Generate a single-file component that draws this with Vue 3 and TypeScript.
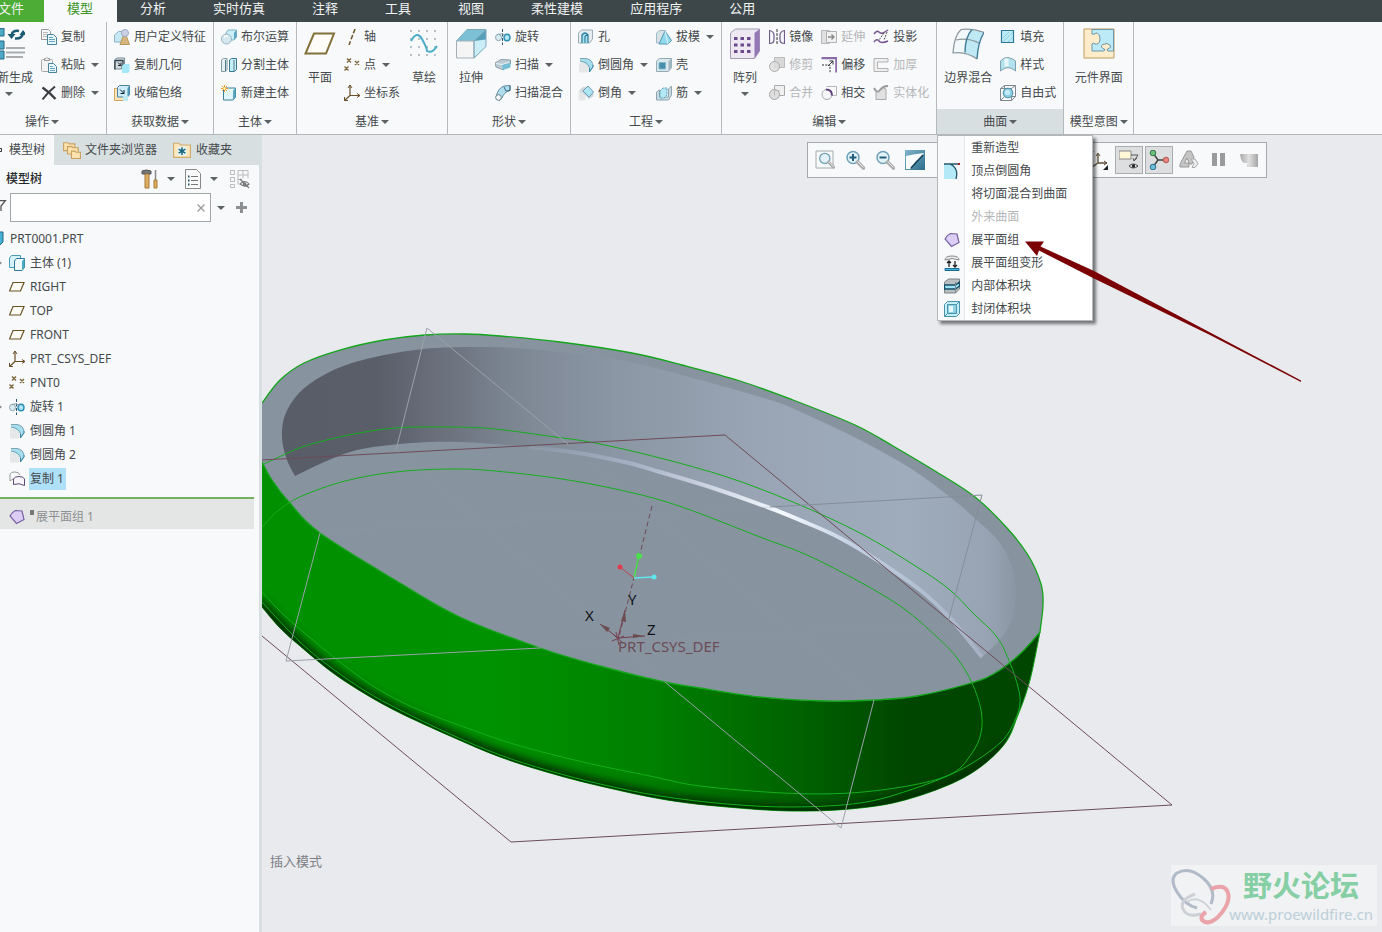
<script setup lang="ts">
import { ref } from 'vue'

interface Cmd { label: string; icon: string; arrow?: boolean; disabled?: boolean }
interface Big { label: string; icon: string; arrow?: boolean }
interface Part { big?: Big; col?: Cmd[] }
interface Group { name: string; key: string; parts: Part[] }
interface Node { label: string; icon: string; expandable?: boolean; selected?: boolean }

const roundIcon = '<path d="M1 5.500h5.500q4 1 4 5v5H1z" fill="#e6e7e9"/><path d="M2 1.500h6q7 1 7 8l-3.500 5q0-8-9.500-10z" fill="#a5dff0"/><path d="M2 1.500h6q7 1 7 8l-3.500 5V11q-1-6-9.500-7" fill="none" stroke="#7fa3b1"/><path d="M15 8v2l-3.500 5V11" fill="none" stroke="#3f88a5"/>'
const revolveIcon = '<path d="M7.500 0v16" stroke="#2b5a72" stroke-dasharray="3 1.500"/><ellipse cx="3.500" cy="8.500" rx="3" ry="3.200" fill="#d9ebf2" stroke="#8fa5b0"/><ellipse cx="12" cy="8.500" rx="3" ry="3.200" fill="#aee6f5" stroke="#2a8db3" stroke-width="1.400"/><path d="M3 5.500q4-2 8 1" fill="none" stroke="#8aa5b1"/>'
const pointIcon = '<path d="M3 1.500l4 4m0-4l-4 4M11 4l4 4m0-4l-4 4M.5 9.500l4 4m0-4l-4 4" stroke="#7b6336" stroke-width="1.300"/>'
const csysIcon = '<path d="M6 0v10.500h10M6 10.500L.5 15.500" fill="none" stroke="#6b4f2a" stroke-width="1.200"/><path d="M4 3l2-3 2 3M13 8.500l3 2-3 2M.5 12v3.500H4" fill="none" stroke="#6b4f2a"/>'
const quiltIcon = '<path d="M1 7q2-4 5.500-5.500L13 2l2 8.500-7.500 4z" fill="#dccdf5" stroke="#7461a3" stroke-width="1.200"/>'
const mag = '<circle cx="8" cy="7.500" r="6" fill="#e4f3fa" stroke="#6fa0b5" stroke-width="1.500"/><path d="M12.500 12l6 6" stroke="#aaa" stroke-width="3.500" stroke-linecap="round"/><path d="M12.500 11.500l6 6" stroke="#eee" stroke-width="1"/>'

const icons: Record<string, string> = {
  copy: '<path d="M.5.500h7l2 2v8h-9z" fill="#f6f6f6" stroke="#999"/><path d="M2 3.500h5M2 5.500h5M2 7.500h4" stroke="#bbb"/><path d="M6.500 5.500h6l3 3v7h-9z" fill="#e6f7fc" stroke="#4a819b"/><path d="M8 8.500h4M8 10.500h6M8 12.500h6" stroke="#6ba5bd"/>',
  paste: '<rect x=".5" y="2.500" width="11" height="12" rx="1" fill="#f4f4f4" stroke="#aaa"/><path d="M3.500 3.500v-2h1.500q1-2 2 0h1.500v2z" fill="#eee" stroke="#999"/><path d="M7.500 6.500h5l3 3v6h-8z" fill="#e6f7fc" stroke="#4a819b"/><path d="M9 9.500h3M9 11.500h5M9 13.500h5" stroke="#6ba5bd"/>',
  del: '<path d="M1.500 2.500Q8 7 14.500 14" fill="none" stroke="#3b3d40" stroke-width="2.400"/><path d="M14 1.500Q7 7 1.500 14.500" fill="none" stroke="#3b3d40" stroke-width="2"/>',
  udf: '<path d="M.5 6l4-3.500H10v8L7 13H.5z" fill="#c4e9f5" stroke="#8ab3c4"/><path d="M6 15.500l3-8h3.500l3 8z" fill="#d6b67c" stroke="#b5965c"/><circle cx="11" cy="4" r="3.500" fill="#ccd1e5" stroke="#a0a6c2"/>',
  copygeom: '<path d="M.5 3l2-2h8v8h-3v3h-7z" fill="#d3dadf" stroke="#7c8c96"/><path d="M1 3.500v9M1 3.500h8V9" fill="none" stroke="#33444e" stroke-width="1.300"/><path d="M4 5.500l3 3m0-3v3H4" stroke="#123" fill="none"/><path d="M8 9l2-2h5.500v7.500l-1.500 1.500H8z" fill="#a5e8f7"/>',
  shrink: '<path d="M.5 3.500h11v12H.5z" fill="#ffe5bb" stroke="#d5a45c"/><path d="M3.500 2.500l2-2h10v9l-2 2.500h-10z" fill="#cbeef8" stroke="#4a819b"/><path d="M13.500 3v9l2-2.500v-9z" fill="#4a9ab5"/><path d="M6 4.500l4 4m0-3.500v3.500H6.500" stroke="#123" fill="none"/><path d="M9 11h5v5H9z" fill="#bce9f4"/>',
  bool: '<path d="M5 4l2-3h8.500v7L13 11H5z" fill="#c9eff8" stroke="#7fb0c3"/><path d="M13 4l2.500-3v7L13 11z" fill="#5aa5bf"/><circle cx="5.500" cy="10" r="5" fill="#d5e8f0" stroke="#9ab6c2"/><path d="M3 8.500q1.500-2.500 4-1.500" stroke="#fff" fill="none" stroke-width="1.500"/>',
  split: '<path d="M.5 3l2-1.500H6v11L4.500 14.500h-4z" fill="#e6eff3" stroke="#7f99a5"/><path d="M8.500 3l2-1.500h5v11L13.500 14.500h-5z" fill="#c4eef8" stroke="#3a7790"/><path d="M4.500 3v11M13 3v11" stroke="#547a8c"/>',
  newbody: '<path d="M2.500 5l2-2h10v9l-2.500 3H2.500z" fill="#e1f6fb" stroke="#3d7f98"/><path d="M12 5.500V15l2.500-3V3z" fill="#5aa5bf"/><path d="M3.500 0v7M0 3.500h7M1 1l5 5M6 1L1 6" stroke="#e39a26"/><circle cx="3.500" cy="3.500" r="1.200" fill="#fff3b0"/>',
  axis: '<path d="M11 0L5 16" stroke="#6b5424" stroke-width="1.500" stroke-dasharray="4.500 2"/>',
  point: pointIcon, csys: csysIcon, revolve: revolveIcon, round: roundIcon, quilt: quiltIcon,
  sweep: '<path d="M0 6l6-3.500 9.500.5v4l-7 1v5L1 10z" fill="#bccbd3" stroke="#8b9fa9"/><path d="M7 8l8.500-2v4.500L8 13z" fill="#74bfd6"/><path d="M1 6.500l6 1 7-2.500" fill="none" stroke="#e7f2f6"/>',
  sweepblend: '<path d="M1 12Q3 3 9 1l6-.5v5Q9 7 7 13l-3 2.500z" fill="#afdeed" stroke="#5f8da1"/><circle cx="3.500" cy="12.500" r="2.800" fill="#fff" stroke="#647f8c"/><path d="M9 2l2 4M15 .5v5L11 6" stroke="#33677f" fill="none"/>',
  hole: '<path d="M.5 4l3-3h11v9l-3 4H.5z" fill="#e5edf0" stroke="#9aafb8"/><path d="M4 14V6q3-4 6 0v8" fill="#a4e1f2" stroke="#2f7f9d" stroke-width="1.300"/><path d="M7 14V7l3-1" fill="none" stroke="#226d8b"/>',
  chamfer: '<path d="M.5 6h7v9.500h-7z" fill="#e6e7e9"/><path d="M1 5.500L5 2l5-.5L15.500 8v3L11 14.500 8 11z" fill="#ccd7dd"/><path d="M5 6l5-5 5.500 6L11 12z" fill="#afe6f4" stroke="#6a9bb0"/>',
  draft: '<path d="M.5 4l3-2.500h6L7 14H.5z" fill="#d7e2e7" stroke="#9dbac6"/><path d="M9 2l6.500 9.500L12 15H3z" fill="#93d9ee" stroke="#5597b0"/><path d="M9 2l3 13" stroke="#dff5fb"/>',
  shell: '<path d="M.5 4l3-2.500h12v9l-3 4H.5z" fill="#dae7ec" stroke="#93a9b3"/><path d="M3 5.500h6.500v6.500H3z" fill="#4690ac" stroke="#7fb5c9"/><path d="M12.500 4v10l3-3V1.500z" fill="#a1b8c3"/>',
  rib: '<path d="M.5 7l3-2v7h9V4l3-3v9l-3 5H.5z" fill="#c9dce3" stroke="#8ea5b0"/><path d="M4 6l3-3h4v7l-3 3H4z" fill="#b5e8f5" stroke="#4f9cb6" stroke-dasharray="2 1"/>',
  mirror: '<path d="M.5 1v14M.5 1.500q4.500 1 4.500 5v4q0 4-4.500 4M15.500 1v14M15.500 1.500q-4.500 1-4.500 5v4q0 4 4.500 4" fill="none" stroke="#705a88" stroke-width="1.200"/><path d="M8 0v16" stroke="#333" stroke-dasharray="3 1"/>',
  extend: '<path d="M.5 1.500h8v13h-8z" fill="#e0e0e0" stroke="#bbb"/><path d="M5.500 2.500h10v11h-10z" fill="#f1f1f1" stroke="#b2b2b2"/><path d="M7 8h6M10.500 5.500L13 8l-2.500 2.500" fill="none" stroke="#888" stroke-width="1.300"/>',
  project: '<path d="M1 5q3-4 5-2t4 1 5-3M1 13q3-4 5-1t9 0" fill="none" stroke="#77558f" stroke-width="1.500"/><path d="M11 4l-5 7M14 3l-3 8" stroke="#555" stroke-dasharray="2 1"/>',
  trim: '<path d="M5.500.500h10v10h-10z" fill="#d8d8d8" stroke="#bbb"/><circle cx="5.500" cy="9.500" r="5" fill="#ddd" fill-opacity=".8" stroke="#aaa"/>',
  offset: '<path d="M.5 1h15v14.500" fill="none" stroke="#8c6ba8" stroke-width="2.500"/><path d="M1 8h8v8" fill="none" stroke="#333" stroke-dasharray="2 1.300"/><path d="M7 9l5-5M8.500 4H12v3.500" fill="none" stroke="#333"/>',
  thicken: '<path d="M15 1.500H1v13h14v-3H4.500V5H15z" fill="#efefef" stroke="#b2b2b2"/>',
  merge: '<path d="M5.500.500h10v10h-10z" fill="#f0f0f0" stroke="#aaa"/><circle cx="5.500" cy="9.500" r="5" fill="#dedede" stroke="#a5a5a5"/><path d="M5.500 10.500v-5h5" stroke="#bbb" fill="none"/>',
  intersect: '<path d="M5.500 1.500h10v9h-5" fill="none" stroke="#b5b5b5"/><circle cx="6" cy="9.500" r="5" fill="#f7f7f9" stroke="#aaa"/><path d="M5 4.500q6 0 6 6" fill="none" stroke="#60407c" stroke-width="2"/>',
  solidify: '<path d="M1 3q3 6 6 2t8-4" fill="none" stroke="#999" stroke-width="2"/><path d="M3 7q3 1 5-2t5-1v10.500H3z" fill="#e1e1e1" stroke="#aaa"/>',
  fill: '<path d="M1.500 1.500h12v12h-12z" fill="#bcecf7" stroke="#2f7795" stroke-width="1.200"/><path d="M3 9l6-6M3 13L13 3M8 13l5-5" stroke="#8fcde0"/>',
  style: '<path d="M.5 4Q4 0 8 .5q5 1 7.500 3.500v10Q8 7 .5 14z" fill="#b3e2ef" stroke="#7f9fac"/><path d="M6.500 1.500v8" stroke="#e8f7fb" stroke-width="4"/>',
  free: '<path d="M.5 3.500h11v12H.5zM4.500.500h11v11h-11zM.5 3.500l4-3M11.500 3.500l4-3M11.500 15.500l4-4M.5 15.500l4-4" fill="none" stroke="#7c888d"/><circle cx="8" cy="8" r="4.800" fill="#8dcfe4" stroke="#4a8ba3"/><circle cx="7.500" cy="7.500" r="2.500" fill="#c6edf7"/>',
  vertexround: '<path d="M0 1h8q6 5 4 15H0z" fill="#b4eaf8"/><path d="M0 1h15M6 1q9 4 6 15" fill="none" stroke="#24566c" stroke-width="1.300"/><path d="M14 0h2v2h-2z" fill="#a22"/>',
  flatdeform: '<path d="M1 5q0-4 7-4t7 4q-7-3-14 0z" fill="#eee" stroke="#888"/><path d="M5 12V6M3 8l2-2 2 2M11 6v6M9 10l2 2 2-2" fill="none" stroke="#222" stroke-width="1.300"/><path d="M1 13.500h14v2H1z" fill="#42b5dc" stroke="#1b6b8c"/>',
  innervol: '<path d="M.5 4l4-3h11v10l-4 4H.5z" fill="#b9bec1" stroke="#7c858a"/><path d="M.5 7h11l4-3v4l-4 3H.5z" fill="#9ae3f4" stroke="#164e66" stroke-width="1.300"/><path d="M11.500 4v11" stroke="#7c858a"/>',
  closedvol: '<path d="M.5 3.500l3-3h12v12l-3 3H.5z" fill="#c4eef8" stroke="#4a93ad"/><path d="M3.500 3.500h9v9h-9z" fill="#8fd1e3" stroke="#4a93ad"/><path d="M5 5h4v6H5z" fill="#e5f8fc"/><path d="M12.500 3.500l3-3M.5 15.500l3-3" stroke="#4a93ad"/>',
  part: '<path d="M0 3l3-2h11v10l-4 4H0z" fill="#46b2d3" stroke="#1e6783"/>',
  bodies: '<path d="M.5 3l2-2.500h9v9l-2 3h-9z" fill="#d6f2f9" stroke="#4a9bb8"/><path d="M5.500 6l2-2.500h8v9l-2.500 3h-7.500z" fill="#eefafd" stroke="#2f7795"/><path d="M13 6v9l2.500-3V3.500z" fill="#4ea9c6"/>',
  plane: '<path d="M4 3.500h11L11.500 12H.5z" fill="#fcfaf4" stroke="#6b5424" stroke-width="1.200"/>',
  copysurf: '<path d="M1 10V4q0-3 5-3 4 0 5 3" fill="none" stroke="#999"/><path d="M1 10q2-2 4-2" fill="none" stroke="#999"/><path d="M4.500 13.500V8q1-2.500 5.500-2.500T15.500 8v6.500q-5.500-3-11-1z" fill="#f8f5fb" stroke="#5c4a73"/>',
  folders: '<g fill="#fde2ad" stroke="#c9a262"><path d="M.5 1.500h4l1 1h5v6h-10z"/><path d="M4 5h4l1 1h4.500v5.500H4z"/><path d="M7.500 9h3l1 1h4v5.500h-8z"/></g>',
  favorite: '<path d="M.5 2h5l1 1.500h9v11H.5z" fill="#fde7ba" stroke="#d0ab6c"/><path d="M4 5h8v8H4z" fill="#e3f3f6"/><path d="M8 5.500v7M5 7.200l6 3.600M11 7.200l-6 3.600" stroke="#14637a" stroke-width="1.300"/>'
}

function dotGrid(): string {
  let out = ''
  for (const y of [3, 11, 19, 27]) for (const x of [3, 11, 19, 27]) out += `<circle cx="${x}" cy="${y}" r=".7"/>`
  return `<g fill="#48606c">${out}</g>`
}

const bigIcons: Record<string, string> = {
  regen: '<path d="M0 2l11-2v8H0zM0 13h11v8H0zM0 23h11v8H0z" fill="#4ea9c6" stroke="#1e6783"/><path d="M18.500 7Q20 2 26 3M30 5.500Q29 11 22 10.500" fill="none" stroke="#1c5a74" stroke-width="2.500"/><path d="M14.500 6h8l-4 5zM26.500 7h7.500l-4-5z" fill="#1c5a74"/><path d="M13 20h19M13 24.500h19M13 29h17" stroke="#a9adaf" stroke-width="2"/>',
  plane: '<path d="M10 5.500h20L22 25.500H1.500z" fill="#fdfcf8" stroke="#82703a" stroke-width="2"/>',
  sketch: dotGrid() + '<path d="M3 13Q9 2 14 11t5 12q5 3 10-5" fill="none" stroke="#4bacc9" stroke-width="2"/>',
  extrude: '<path d="M1.500 13L12 1.500h19L19 13z" fill="#7cc0d6"/><path d="M19 13L31 1.500v17L19 31z" fill="#cbedf7"/><path d="M19 13L31 1.500v10z" fill="#559fb9"/><path d="M1.500 13H19v17H1.500z" fill="#f5f5f6" stroke="#a5b0b6"/><path d="M1.500 13L12 1.500h19v17L19 30V13L31 1.500" fill="none" stroke="#7fa9b9"/>',
  pattern: '<path d="M1.500 5l5-4h24v22l-5 7.500h-24z" fill="#ede8f2" stroke="#a59cb2"/><path d="M25.500 5l5-4v22l-5 7.500z" fill="#9577b5"/><path d="M5 9h3.500v3H5zM11.500 9H15v3h-3.500zM18 9h3.500v3H18zM5 15.500h3.500v3H5zM11.500 15.500H15v3h-3.500zM18 15.500h3.500v3H18zM5 22h3.500v3H5zM11.500 22H15v3h-3.500zM18 22h3.500v3H18z" fill="#6a4a8c"/>',
  boundary: '<path d="M1 25Q2 5 9 1.500q9-2 23 3Q26 14 25 31 14 23 1 25z" fill="#f3f9fb"/><path d="M20 2Q29 2 32 4.500 26 14 25 31q-6-5-12-6.500Q14 9 20 2z" fill="#bfe9f5"/><path d="M4 12q12-3 24 3.500M9 1.500Q2 8 1 25 14 23 25 31M9 1.500Q20 0 32 4.500" fill="none" stroke="#8a979d" stroke-width="1.200"/><path d="M20 1.500Q13 9 13 24.500M32 4.500Q26 14 25 31" fill="none" stroke="#3f7c96" stroke-width="1.400"/>',
  component: '<path d="M1 1h30v29H1z" fill="#ffeccb" stroke="#c39a60"/><path d="M9 1.500h21.500V23H26q-3 0-1.500-2 4-1 3-3.500-3-3.500-8-1-3 3 2 4.500 1 2-1.500 2H9v-7q2-2 3 0 4 1 5-4 0-7-4-7-2 2-4 1z" fill="#bdeaf7" stroke="#6b97a8"/>'
}

const groups: Group[] = [
  { name: '操作', key: 'ops', parts: [
    { big: { label: '重新生成', icon: 'regen', arrow: true } },
    { col: [{ label: '复制', icon: 'copy' }, { label: '粘贴', icon: 'paste', arrow: true }, { label: '删除', icon: 'del', arrow: true }] }] },
  { name: '获取数据', key: 'data', parts: [
    { col: [{ label: '用户定义特征', icon: 'udf' }, { label: '复制几何', icon: 'copygeom' }, { label: '收缩包络', icon: 'shrink' }] }] },
  { name: '主体', key: 'body', parts: [
    { col: [{ label: '布尔运算', icon: 'bool' }, { label: '分割主体', icon: 'split' }, { label: '新建主体', icon: 'newbody' }] }] },
  { name: '基准', key: 'datum', parts: [
    { big: { label: '平面', icon: 'plane' } },
    { col: [{ label: '轴', icon: 'axis' }, { label: '点', icon: 'point', arrow: true }, { label: '坐标系', icon: 'csys' }] },
    { big: { label: '草绘', icon: 'sketch' } }] },
  { name: '形状', key: 'shape', parts: [
    { big: { label: '拉伸', icon: 'extrude' } },
    { col: [{ label: '旋转', icon: 'revolve' }, { label: '扫描', icon: 'sweep', arrow: true }, { label: '扫描混合', icon: 'sweepblend' }] }] },
  { name: '工程', key: 'eng', parts: [
    { col: [{ label: '孔', icon: 'hole' }, { label: '倒圆角', icon: 'round', arrow: true }, { label: '倒角', icon: 'chamfer', arrow: true }] },
    { col: [{ label: '拔模', icon: 'draft', arrow: true }, { label: '壳', icon: 'shell' }, { label: '筋', icon: 'rib', arrow: true }] }] },
  { name: '编辑', key: 'edit', parts: [
    { big: { label: '阵列', icon: 'pattern', arrow: true } },
    { col: [{ label: '镜像', icon: 'mirror' }, { label: '修剪', icon: 'trim', disabled: true }, { label: '合并', icon: 'merge', disabled: true }] },
    { col: [{ label: '延伸', icon: 'extend', disabled: true }, { label: '偏移', icon: 'offset' }, { label: '相交', icon: 'intersect' }] },
    { col: [{ label: '投影', icon: 'project' }, { label: '加厚', icon: 'thicken', disabled: true }, { label: '实体化', icon: 'solidify', disabled: true }] }] },
  { name: '曲面', key: 'surface', parts: [
    { big: { label: '边界混合', icon: 'boundary' } },
    { col: [{ label: '填充', icon: 'fill' }, { label: '样式', icon: 'style' }, { label: '自由式', icon: 'free' }] }] },
  { name: '模型意图', key: 'intent', parts: [{ big: { label: '元件界面', icon: 'component' } }] }
]

const menu: Cmd[] = [
  { label: '重新造型', icon: '' },
  { label: '顶点倒圆角', icon: 'vertexround' },
  { label: '将切面混合到曲面', icon: '' },
  { label: '外来曲面', icon: '', disabled: true },
  { label: '展平面组', icon: 'quilt' },
  { label: '展平面组变形', icon: 'flatdeform' },
  { label: '内部体积块', icon: 'innervol' },
  { label: '封闭体积块', icon: 'closedvol' }
]

const tabs = ['文件', '模型', '分析', '实时仿真', '注释', '工具', '视图', '柔性建模', '应用程序', '公用']
const nodes: Node[] = [
  { label: '主体 (1)', icon: 'bodies', expandable: true },
  { label: 'RIGHT', icon: 'plane' },
  { label: 'TOP', icon: 'plane' },
  { label: 'FRONT', icon: 'plane' },
  { label: 'PRT_CSYS_DEF', icon: 'csys' },
  { label: 'PNT0', icon: 'point' },
  { label: '旋转 1', icon: 'revolve', expandable: true },
  { label: '倒圆角 1', icon: 'round' },
  { label: '倒圆角 2', icon: 'round' },
  { label: '复制 1', icon: 'copysurf', selected: true }
]

interface Tool { name: string; svg: string; on?: boolean }
const leftTools: Tool[] = [
  { name: '重新调整', svg: '<path d="M1 1h17v17H1z" fill="none" stroke="#a3aaae"/><g transform="translate(3 2) scale(.85)">' + mag + '</g>' },
  { name: '放大', svg: mag + '<path d="M4.500 7.500h7M8 4v7" stroke="#1f5f7a" stroke-width="2"/>' },
  { name: '缩小', svg: mag + '<path d="M4.500 7.500h7" stroke="#1f5f7a" stroke-width="2"/>' },
  { name: '重画', svg: '<linearGradient id="rp" x1="0" y1="0" x2="1" y2="1"><stop offset="0" stop-color="#7fb5cb"/><stop offset="1" stop-color="#2c6d8a"/></linearGradient><path d="M0 0h20v20H0z" fill="url(#rp)"/><path d="M1 6Q9 4 19 3q-2 4-8 8l-6 8H1z" fill="#f8fcfd"/><path d="M18 5L6 18" stroke="#174258" stroke-width="1.500"/>' }
]
const rightTools: Tool[] = [
  { name: '基准显示过滤器', svg: '<path d="M4 1L0 10M9 4v9h9M9 13l-6 4" fill="none" stroke="#5f4f36" stroke-width="1.300"/><path d="M7 6l2-3 2 3M15 11l3 2-3 2" fill="none" stroke="#5f4f36"/><path d="M19 15v5h-5z" fill="#222"/>' },
  { name: '注释显示', svg: '<path d="M0 1h12v8H0z" fill="#fdf7d8" stroke="#888"/><path d="M12 5h7l-4 6M18 8l-3 3-1-3" fill="none" stroke="#555"/><path d="M10 16q4-4 9 0-5 4-9 0z" fill="#eee" stroke="#444"/><circle cx="14.500" cy="16" r="1.700" fill="#222"/>', on: true },
  { name: '旋转中心', svg: '<path d="M4 3l5 7 8 0M9 10l-5 7" fill="none" stroke="#444" stroke-width="1.500"/><circle cx="4" cy="3" r="2.800" fill="#6cc07a" stroke="#33774a"/><circle cx="17" cy="10" r="2.800" fill="#e8857c" stroke="#b35550"/><circle cx="4" cy="17" r="2.800" fill="#6cbdd8" stroke="#2c7291"/>', on: true },
  { name: '仿真', svg: '<path d="M8 1h4l3 6-2 7h-2.500L8 8l-2.500 5H10v4H1v-3z" fill="#c4c4c4" stroke="#999"/><path d="M12 9h4l3 4.500-3 4h-3l2-4z" fill="#eee" stroke="#aaa"/>' },
  { name: '暂停', svg: '<path d="M3 3h5v13H3zM11 3h5v13h-5z" fill="#9b9b9b"/>' },
  { name: '继续', svg: '<linearGradient id="rs"><stop offset="0" stop-color="#aaa"/><stop offset=".5" stop-color="#e0e0e0"/><stop offset="1" stop-color="#a5a5a5"/></linearGradient><path d="M1 4h18v13H8q-1-2 1-4H5Q2 12 1 4z" fill="url(#rs)"/>' }
]

type Pt = [number, number]

/** Smooth curve through the given points (Catmull-Rom turned into cubic Béziers). */
function curve(pts: Pt[], start = 'M'): string {
  let d = `${start}${pts[0][0]} ${pts[0][1]}`
  for (let i = 0; i < pts.length - 1; i++) {
    const a = pts[i - 1] ?? pts[i]
    const b = pts[i]
    const c = pts[i + 1]
    const e = pts[i + 2] ?? c
    const n = [b[0] + (c[0] - a[0]) / 6, b[1] + (c[1] - a[1]) / 6, c[0] - (e[0] - b[0]) / 6, c[1] - (e[1] - b[1]) / 6, c[0], c[1]]
    d += 'C' + n.map(v => v.toFixed(1)).join(' ')
  }
  return d
}

const rimBack: Pt[] = [[262, 403], [280, 380], [304, 363], [340, 350], [384, 340], [425, 335], [465, 334], [500, 336], [560, 342], [632, 353], [682, 365], [740, 381], [793, 400], [855, 425], [893, 446], [935, 471], [975, 497], [1007, 528], [1028, 555], [1041, 584], [1043, 605], [1040, 632]]
const rimFront: Pt[] = [[1040, 632], [1020, 654], [995, 673], [971, 683], [917, 696], [874, 700], [825, 701], [760, 697], [700, 688], [660, 681], [600, 666], [540, 648], [462, 618], [400, 583], [320, 533], [289, 502], [272, 480], [262, 462]]
const base: Pt[] = [[262, 607], [280, 628], [300, 646], [333, 673], [367, 695], [400, 713], [450, 736], [500, 757], [550, 773], [600, 786], [667, 800], [727, 807], [790, 811], [850, 809], [905, 800], [965, 777], [1003, 746], [1018, 715], [1030, 680], [1040, 632]]
const wallTop: Pt[] = [[295, 476], [287, 460], [282, 438], [285, 415], [299, 393], [322, 376], [352, 363], [395, 353], [435, 348], [475, 347], [515, 348], [569, 353], [629, 362], [682, 375], [770, 400], [803, 413], [860, 440], [910, 468], [950, 497], [980, 523], [1000, 543], [1012, 567], [1016, 593], [1012, 620], [1000, 640], [982, 657]]
const wallFoot: Pt[] = [[982, 657], [970, 642], [950, 618], [920, 590], [880, 562], [840, 538], [807, 523], [770, 508], [710, 487], [660, 472], [629, 463], [579, 453], [529, 447], [462, 442], [412, 443], [362, 449], [329, 460], [295, 476]]
const edgeOuter: Pt[] = [[262, 465], [279, 457], [305, 446], [349, 435], [395, 428], [449, 427], [495, 429], [555, 437], [595, 443], [660, 458], [727, 477], [793, 502], [860, 533], [917, 567], [950, 590], [973, 613], [997, 637], [1010, 663], [1018, 687], [1020, 703], [1015, 720], [1000, 743], [960, 770], [910, 790], [860, 803], [793, 807], [727, 804], [660, 796], [600, 784], [550, 771], [500, 755], [450, 734], [400, 710], [367, 692], [333, 669], [300, 642], [262, 602]]
const edgeInner: Pt[] = [[262, 527], [279, 510], [302, 496], [345, 481], [395, 472], [449, 469], [495, 471], [562, 479], [629, 492], [682, 507], [760, 537], [807, 555], [860, 582], [903, 608], [937, 637], [957, 658], [972, 683], [981, 710], [981, 733], [972, 753], [953, 773], [913, 785], [850, 793], [783, 793], [700, 786], [650, 776], [583, 762], [517, 745], [467, 728], [417, 709], [383, 692], [353, 672], [313, 640], [285, 616], [262, 592]]
const shadow: Pt[] = [[255, 604], [300, 649], [333, 676], [367, 698], [400, 716], [450, 739], [500, 759], [550, 775], [600, 788], [667, 802], [727, 809], [790, 813], [850, 811], [905, 802], [965, 780], [1008, 748]]

const hull = curve(rimFront.slice().reverse()) + curve(base.slice().reverse(), 'L') + 'Z'
const face = curve(rimBack) + curve(rimFront, 'L') + 'Z'
const rimLine = curve(rimBack) + curve(rimFront, 'L')
const wall = curve(wallTop) + curve(wallFoot, 'L') + 'Z'
const glint = curve(wallFoot.slice(0, 13).reverse())

const query = ref('')
const menuOpen = ref(true)
const activeTab = ref(1)
</script>

<template>
  <div class="app">
    <nav class="tabs">
      <button v-for="(t, i) in tabs" :key="t" type="button" :class="['tab', { file: i === 0, active: i === activeTab }]" @click="activeTab = i">{{ t }}</button>
    </nav>

    <header class="ribbon">
      <section v-for="g in groups" :key="g.key" :class="['group', g.key]">
        <div class="group-body">
          <template v-for="(p, i) in g.parts" :key="i">
            <button v-if="p.big" type="button" class="big">
              <svg width="32" height="32" viewBox="0 0 32 32" v-html="bigIcons[p.big.icon]"></svg>
              <span>{{ p.big.label }}</span>
              <i v-if="p.big.arrow" class="caret"></i>
            </button>
            <div v-else class="col">
              <button v-for="c in p.col" :key="c.label" type="button" class="cmd" :disabled="c.disabled">
                <svg width="16" height="16" viewBox="0 0 16 16" v-html="icons[c.icon]"></svg>
                <span>{{ c.label }}</span>
                <i v-if="c.arrow" class="caret"></i>
              </button>
            </div>
          </template>
        </div>
        <button type="button" class="group-name" @click="g.key === 'surface' && (menuOpen = !menuOpen)">
          <span>{{ g.name }}</span><i class="caret"></i>
        </button>
        <div v-if="g.key === 'surface' && menuOpen" class="menu" role="menu">
          <button v-for="m in menu" :key="m.label" type="button" role="menuitem" :disabled="m.disabled">
            <span class="menu-icon"><svg v-if="m.icon" width="16" height="16" viewBox="0 0 16 16" v-html="icons[m.icon]"></svg></span>
            <span>{{ m.label }}</span>
          </button>
        </div>
      </section>
    </header>

    <main class="main">
      <aside class="side">
        <div class="side-tabs">
          <button type="button" class="side-tab current"><svg width="4" height="16" viewBox="0 0 4 16"><path d="M-2 6.500h3.500v3H-2" fill="none" stroke="#333" /></svg><span>模型树</span></button>
          <button type="button" class="side-tab browse"><svg width="18" height="18" viewBox="0 0 16 16" v-html="icons.folders"></svg><span>文件夹浏览器</span></button>
          <button type="button" class="side-tab fav"><svg width="18" height="18" viewBox="0 0 16 16" v-html="icons.favorite"></svg><span>收藏夹</span></button>
        </div>
        <div class="side-pane">
          <div class="side-head">
            <h2>模型树</h2>
            <button type="button" aria-label="设置">
              <svg width="18" height="20" viewBox="0 0 18 20"><path d="M1 2q4-2 9 0v3H1z" fill="#777" stroke="#555" /><path d="M4 5h4v14H4z" fill="#e0ae60" stroke="#a37b3f" /><path d="M14.500 1v10" stroke="#888" stroke-width="1.500" /><path d="M13 11h3v8h-3z" fill="#e2ad54" stroke="#a37b3f" /></svg>
              <i class="caret"></i>
            </button>
            <button type="button" aria-label="显示">
              <svg width="18" height="20" viewBox="0 0 18 20"><path d="M1.500.500h11l4 4v15h-15z" fill="#fafafa" stroke="#888" /><path d="M7 7.500h7M7 11.500h7M7 15.500h7" stroke="#777" /><path d="M4 7.500h1.500M4 11.500h1.500M4 15.500h1.500" stroke="#256" stroke-width="2" /></svg>
              <i class="caret"></i>
            </button>
            <button type="button" aria-label="隐藏列">
              <svg width="20" height="20" viewBox="0 0 20 20"><path d="M.5 1.500h4v4h-4zM.5 8.500h4v4h-4zM.5 15.500h4v3h-4zM8 10.500h4M8 1.500h10v8M8 1.500v14M13 1.500v8M8 6h10" fill="none" stroke="#bbb" /><path d="M10 15q5-5 9 0-4 4-9 0zM10 10l9 9" fill="none" stroke="#777" stroke-width="1.200" /><circle cx="14.500" cy="15" r="1.800" fill="#777" /></svg>
            </button>
          </div>
          <div class="search">
            <svg width="10" height="16" viewBox="0 0 10 16"><path d="M-3 .5h8.500L1 6v5" fill="none" stroke="#555" stroke-width="1.300" /></svg>
            <div class="box">
              <input v-model="query" type="text" aria-label="过滤模型树" />
              <button type="button" aria-label="清除" @click="query = ''"><svg width="8" height="8" viewBox="0 0 8 8"><path d="M.5.500l7 7m0-7l-7 7" stroke="#999" stroke-width="1.300" /></svg></button>
            </div>
            <button type="button" aria-label="过滤选项"><i class="caret"></i></button>
            <button type="button" aria-label="添加"><svg width="11" height="11" viewBox="0 0 11 11"><path d="M0 5.500h11M5.500 0v11" stroke="#8c9092" stroke-width="3" /></svg></button>
          </div>
          <ul class="tree">
            <li class="root"><svg width="16" height="16" viewBox="0 0 16 16" v-html="icons.part"></svg><span>PRT0001.PRT</span></li>
            <li v-for="n in nodes" :key="n.label">
              <i class="twist"><svg v-if="n.expandable" width="3" height="6" viewBox="0 0 3 6"><path d="M-2 0l4 3-4 3z" fill="#888" /></svg></i>
              <svg width="16" height="16" viewBox="0 0 16 16" v-html="icons[n.icon]"></svg>
              <span :class="{ selected: n.selected }">{{ n.label }}</span>
            </li>
          </ul>
          <div class="pending">
            <svg width="16" height="16" viewBox="0 0 16 16" v-html="icons.quilt"></svg>
            <i class="mark"></i><span>展平面组 1</span>
          </div>
        </div>
      </aside>

      <section class="view">
        <svg class="scene" aria-hidden="true">
          <defs>
            <linearGradient id="wall" gradientUnits="userSpaceOnUse" x1="282" y1="0" x2="1016" y2="0">
              <stop offset="0" stop-color="#585d68" /><stop offset=".13" stop-color="#595e69" /><stop offset=".22" stop-color="#6b717d" /><stop offset=".32" stop-color="#7d8794" /><stop offset=".45" stop-color="#8b96a4" /><stop offset=".65" stop-color="#99a5b4" /><stop offset=".85" stop-color="#9facbb" /><stop offset=".96" stop-color="#98a4b3" /><stop offset="1" stop-color="#8b96a4" />
            </linearGradient>
            <linearGradient id="side" gradientUnits="userSpaceOnUse" x1="262" y1="0" x2="1043" y2="0">
              <stop offset="0" stop-color="#009000" /><stop offset=".3" stop-color="#009200" /><stop offset=".5" stop-color="#008000" /><stop offset=".7" stop-color="#006000" /><stop offset=".83" stop-color="#004500" /><stop offset="1" stop-color="#004600" />
            </linearGradient>
            <linearGradient id="glint" gradientUnits="userSpaceOnUse" x1="480" y1="0" x2="985" y2="0">
              <stop offset="0" stop-color="#95a0b0" stop-opacity="0" /><stop offset=".3" stop-color="#a5b0c4" /><stop offset=".6" stop-color="#f4f8ff" /><stop offset=".75" stop-color="#c0cde0" /><stop offset="1" stop-color="#a5b1c3" />
            </linearGradient>
            <filter id="soft" x="-5%" y="-20%" width="110%" height="140%"><feGaussianBlur stdDeviation="4" /></filter>
            <clipPath id="hull"><path :d="hull" /></clipPath>
          </defs>
          <g transform="translate(-262 -135)" fill="none">
            <path :d="hull" fill="url(#side)" stroke="#12a012" />
            <path clip-path="url(#hull)" :d="curve(shadow)" stroke="#003300" stroke-width="18" filter="url(#soft)" />
            <path :d="face" fill="#8893a0" />
            <path :d="wall" fill="url(#wall)" />
            <path :d="glint" stroke="url(#glint)" stroke-width="4" />
            <path :d="rimLine" stroke="#13a51a" stroke-width="1.300" />
            <g stroke="#14ae1c">
              <path :d="curve(edgeOuter)" />
              <path :d="curve(edgeInner)" />
            </g>
            <path d="M262 460L725 435 1172 805 511 842 262 636" stroke="#6d4c57" />
            <g stroke="#9aa1a9">
              <path d="M427 328L396 450M427 328L568 444M286 661L320 533M286 661L540 648M665 682L841 828 874 700" />
              <path d="M982 495L770 507M982 495L948 622" stroke="#858e9a" />
              <path d="M320 531L770 507M540 648L948 624M396 450L665 682M568 444L874 700" stroke="#929ba6" stroke-opacity=".3" />
            </g>
            <path d="M652 506L619 637" stroke="#6d4c57" stroke-dasharray="5 3" />
            <path d="M634 578L639 556" stroke="#4ce04c" stroke-width="1.500" /><path d="M634 578L620 567" stroke="#c04050" /><path d="M634 578L653 577" stroke="#5fe6ee" stroke-width="1.500" />
            <circle cx="639" cy="556" r="3" fill="#4ce04c" /><circle cx="620" cy="567" r="2.500" fill="#e03c50" /><circle cx="654" cy="577" r="2.500" fill="#5fe6ee" />
            <path d="M618 638L600 624M618 638L625 610M618 638L645 636M613 634l10 9M612 641l12-5M616 632l3 13" stroke="#75404f" />
            <path d="M600 624l10 4-3 4zM625 610l1 12-5-1zM645 636l-12-2v4z" fill="#6d4c50" />
            <g class="axis"><text x="585" y="621">X</text><text x="628" y="605">Y</text><text x="647" y="635">Z</text></g>
            <text class="csys-name" x="618" y="652">PRT_CSYS_DEF</text>
          </g>
        </svg>

        <div class="toolbar" role="toolbar" aria-label="图形">
          <button v-for="t in leftTools" :key="t.name" type="button" :aria-label="t.name"><svg width="20" height="20" viewBox="0 0 20 20" v-html="t.svg"></svg></button>
          <span class="gap"></span>
          <button v-for="t in rightTools" :key="t.name" type="button" :class="{ on: t.on }" :aria-label="t.name"><svg width="20" height="20" viewBox="0 0 20 20" v-html="t.svg"></svg></button>
        </div>

        <footer class="view-foot">
          <span class="hint">插入模式</span>
          <div class="brand">
            <svg width="62" height="60" viewBox="0 0 62 60"><g fill="none"><path d="M40 38Q46 24 32 12T6 7Q-2 13 6 26T26 42" stroke="#b0bac8" stroke-width="3" /><path d="M24 28Q8 34 12 43t18 5" stroke="#cdd0d5" stroke-width="3" /><path d="M16 36q12-8 24 8" stroke="#cfd2d6" stroke-width="2" /><path d="M40 23q14-6 17 4T47 51q-10 9-16 3-2-4 4-8" stroke="#eaa3a9" stroke-width="4" /></g></svg>
            <div class="brand-text"><strong>野火论坛</strong><span>www.proewildfire.cn</span></div>
          </div>
        </footer>
      </section>
    </main>

    <svg class="pointer" width="290" height="150" viewBox="0 0 290 150" aria-hidden="true">
      <path d="M5 1.500L24 1.500 20.500 6.500 73 30.500 281 140.500V142L190 95 73 38 19 10.500 17 16z" fill="#7b0004" />
    </svg>
  </div>
</template>

<style>
body { margin: 0; }
</style>

<style scoped>
.app {
  position: relative;
  display: flex;
  flex-direction: column;
  min-height: 100vh;
  overflow: hidden;
  background: #f7f9fb;
  color: #45494c;
  font: 12px/16px "Noto Sans", "Noto Sans CJK SC", sans-serif;
}
button {
  margin: 0;
  padding: 0;
  border: 0;
  background: none;
  color: inherit;
  font: inherit;
  white-space: nowrap;
}
button:disabled { color: #b4b6b8; }
svg { flex: none; display: block; }
.caret {
  flex: none;
  display: block;
  width: 0;
  height: 0;
  border: 4px solid transparent;
  border-top-color: #5c6164;
  border-bottom: 0;
}
.tabs { display: flex; height: 22px; background: #3d4649; }
.tab { padding: 0 24px 6px 23px; color: #f1f3f3; font-size: 13px; line-height: 16px; }
.tab.file { margin-left: -2px; padding: 0 20px 6px 0; background: #4dac35; }
.tab.active { background: #f7f9fb; color: #3f942a; }

.ribbon { display: flex; height: 112px; border-bottom: 1px solid #b3b7ba; }
.group {
  position: relative;
  display: flex;
  flex-direction: column;
  border-right: 1px solid #b5b9bc;
}
.group.ops { margin-left: -22px; }
.group.intent { min-width: 69px; }
.group-body { display: flex; gap: 8px; flex: 1; padding: 1px 7px 0; justify-content: center; }
.col { display: flex; flex-direction: column; }
.cmd { display: flex; align-items: center; gap: 4px; height: 28px; }
.cmd .caret { margin-left: 2px; }
.big { display: flex; flex-direction: column; align-items: center; min-width: 32px; padding-top: 5px; }
.big span { margin: 10px 0 6px; }
.group-name { display: flex; align-items: center; justify-content: center; gap: 2px; height: 25px; }
.surface .group-name { background: #d8dfe1; }

.menu {
  position: absolute;
  z-index: 5;
  top: 113px;
  left: 0;
  display: flex;
  flex-direction: column;
  min-width: 154px;
  border: 1px solid #b5b8ba;
  background: #fff;
  box-shadow: 3px 3px 3px rgba(0, 0, 0, .5);
}
.menu button { display: flex; align-items: center; gap: 6px; height: 23px; }
.menu-icon { display: flex; align-items: center; width: 20px; height: 23px; padding-left: 6px; border-right: 1px solid #e4e6e8; background: #f7f9fb; }

.main { display: flex; flex: 1; }
.side { display: flex; flex-direction: column; width: 262px; background: #d8dfe1; flex: none; }
.side-tabs { display: flex; height: 30px; }
.side-tab { display: flex; align-items: center; gap: 5px; }
.side-tab.current { padding-right: 9px; background: #f7f9fb; }
.side-tab.browse { margin-left: 9px; gap: 4px; }
.side-tab.fav { margin-left: 16px; }
.side-pane { flex: 1; margin-right: 3px; background: #f7f9fb; }
.side-head { display: flex; align-items: center; height: 28px; padding: 0 9px 0 6px; }
.side-head h2 { flex: 1; margin: 0; font: inherit; font-weight: 500; color: #25282a; }
.side-head button { display: flex; align-items: center; gap: 8px; margin-left: 9px; }
.side-head button:last-child { margin-left: 12px; }
.search { display: flex; align-items: center; }
.search > button { margin-left: 6px; }
.search > button:last-child { margin-left: 11px; }
.box { display: flex; align-items: center; width: 199px; height: 27px; border: 1px solid #a2a7aa; background: #fff; }
.box input { flex: 1; min-width: 0; height: 25px; padding: 0 6px; border: 0; outline: 0; background: none; font: inherit; }
.box button { padding: 0 5px; }
.tree { margin: 0; padding: 5px 0 0; list-style: none; }
.tree li { display: flex; align-items: center; gap: 5px; height: 24px; }
.tree .root svg { margin-left: -11px; }
.twist { width: 4px; }
.tree span { line-height: 22px; }
.tree .selected { margin-left: -1px; padding: 0 2px 0 1px; background: #aee0f8; }
.pending {
  display: flex;
  align-items: center;
  height: 30px;
  margin: 6px 5px 0 0;
  padding-left: 9px;
  border-top: 2px solid #74b15f;
  background: #e4e5e5;
  color: #8d9092;
}
.pending svg, .pending span { margin-top: 6px; }
.mark { width: 4px; height: 5px; margin: 0 2px 4px 5px; background: #777; }

.view {
  position: relative;
  flex: 1;
  display: flex;
  flex-direction: column;
  align-items: flex-end;
  justify-content: space-between;
  min-width: 0;
  background: #e8eaee;
}
.scene { position: absolute; inset: 0; width: 100%; height: 100%; }
.axis { fill: #101418; font-size: 15px; }
.csys-name { fill: #6d4c57; font-size: 15px; }
.toolbar {
  position: relative;
  display: flex;
  align-items: center;
  gap: 2px;
  width: 452px;
  height: 34px;
  margin: 7px 115px 0 0;
  padding: 0 3px;
  border: 1px solid #a5a9ac;
  background: #f7f9fb;
}
.toolbar button { display: flex; align-items: center; justify-content: center; width: 28px; height: 28px; box-sizing: border-box; }
.toolbar .on { border: 1px solid #a9adb0; background: #dcdee0; }
.gap { flex: 1; }
.view-foot { position: relative; align-self: stretch; display: flex; align-items: flex-end; justify-content: space-between; padding: 0 5px 6px 8px; }
.hint { padding-bottom: 57px; color: #7c8084; font-size: 13px; }
.brand { display: flex; align-items: center; height: 61px; padding-right: 4px; background: #f0f2f4; }
.brand-text { display: flex; flex-direction: column; align-items: flex-end; margin-left: -4px; }
.brand strong { padding-right: 14px; color: #86cfa4; font-size: 29px; line-height: 36px; }
.brand span { color: #bccfd8; font-size: 15px; line-height: 20px; }
.pointer { position: absolute; z-index: 10; top: 240px; left: 1020px; pointer-events: none; }
</style>
